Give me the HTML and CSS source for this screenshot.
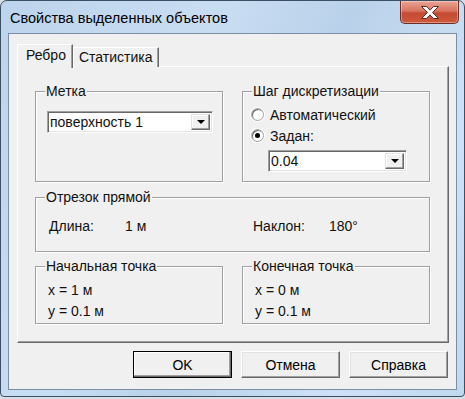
FILE: index.html
```html
<!DOCTYPE html>
<html lang="ru">
<head>
  <meta charset="UTF-8" />
  <title>Свойства выделенных объектов</title>
  <link rel="stylesheet" href="styles.css">
</head>
<body>
  <div class="window">
    <div class="titlebar">
      <span class="title">Свойства выделенных объектов</span>
      <div class="close">
        <svg width="22" height="15" viewBox="0 0 22 15">
          <path d="M2.5 1.5h5l3.5 3.6 3.5-3.6h5l-6 6 6 6h-5l-3.5-3.6-3.5 3.6h-5l6-6z" fill="#fff" stroke="#5a2a26" stroke-width="1" stroke-linejoin="round"/>
        </svg>
      </div>
    </div>

    <div class="client">
      <div class="tabs">
        <div class="tab active">Ребро</div>
        <div class="tab">Статистика</div>
      </div>

      <div class="panel">
        <div class="row row-top">
          <div class="group">
            <span class="legend">Метка</span>
            <div class="combo combo-label">
              <span class="combo-text">поверхность 1</span>
              <span class="combo-btn"><i class="arrow"></i></span>
            </div>
          </div>
          <div class="group group-step">
            <span class="legend">Шаг дискретизации</span>
            <div class="radio"><span class="dot"></span>Автоматический</div>
            <div class="radio"><span class="dot checked"></span>Задан:</div>
            <div class="combo combo-step">
              <span class="combo-text">0.04</span>
              <span class="combo-btn"><i class="arrow"></i></span>
            </div>
          </div>
        </div>

        <div class="group group-segment">
          <span class="legend">Отрезок прямой</span>
          <span class="cell c1">Длина:</span>
          <span class="cell c2">1 м</span>
          <span class="cell c3">Наклон:</span>
          <span class="cell">180°</span>
        </div>

        <div class="row row-bottom">
          <div class="group group-point">
            <span class="legend">Начальная точка</span>
            <div>x = 1 м</div>
            <div>y = 0.1 м</div>
          </div>
          <div class="group group-point">
            <span class="legend">Конечная точка</span>
            <div>x = 0 м</div>
            <div>y = 0.1 м</div>
          </div>
        </div>
      </div>

      <div class="buttons">
        <button class="default">OK</button>
        <button>Отмена</button>
        <button>Справка</button>
      </div>
    </div>
  </div>
</body>
</html>
```

FILE: styles.css
```css
* {
  box-sizing: border-box;
}

body {
  margin: 0;
  width: 465px;
  height: 399px;
  overflow: hidden;
  background: #d9dee4;
  font-family: 'Liberation Sans', Arial, sans-serif;
  font-size: 14px;
  color: #111;
}

.window {
  height: 397px;
  border: 1px solid #3d4f63;
  border-radius: 7px 7px 4px 4px;
  background: linear-gradient(115deg, #bcd4ec 0%, #c9ddf2 35%, #b9d1ea 55%, #cfe1f4 80%, #c2d8ee 100%);
  padding: 0 7px 6px 7px;
  display: flex;
  flex-direction: column;
}

.titlebar {
  height: 32px;
  display: flex;
  align-items: flex-start;
  justify-content: space-between;
}

.title {
  margin: 9px 0 0 2px;
  font-size: 14.5px;
  color: #000;
}

.close {
  width: 59px;
  height: 23px;
  margin-right: -2px;
  border: 1px solid #6b2e28;
  border-top: none;
  border-radius: 0 0 5px 5px;
  background: linear-gradient(#e8a596 0%, #d9745f 45%, #c44a33 55%, #d0593c 100%);
  box-shadow: inset 0 0 0 1px rgba(255, 255, 255, 0.35);
  display: flex;
  align-items: center;
  justify-content: center;
}

.client {
  flex: 1;
  border: 1px solid #7b8fa4;
  background: #f0f0f0;
  padding: 10px 7px 10px 8px;
  display: flex;
  flex-direction: column;
}

.tabs {
  display: flex;
  align-items: flex-end;
  height: 23px;
  position: relative;
  z-index: 1;
  margin-bottom: -1px;
}

.tab {
  height: 20px;
  padding: 1px 5px 0 5px;
  border: 1px solid #fff;
  border-bottom: none;
  border-right: 1px solid #696969;
  box-shadow: inset -1px 0 0 #a0a0a0;
  background: #f0f0f0;
  line-height: 17px;
}

.tab.active {
  height: 24px;
  width: 56px;
  padding: 2px 0 0 8px;
  margin-bottom: -1px;
}

.panel {
  height: 277px;
  border: 1px solid #fff;
  border-right-color: #696969;
  border-bottom-color: #696969;
  box-shadow: inset -1px -1px 0 #a0a0a0;
  padding: 24px 18px 18px 17px;
  display: flex;
  flex-direction: column;
}

.row {
  display: grid;
  grid-template-columns: 188px 188px;
  column-gap: 19px;
}

.group {
  position: relative;
  border: 1px solid #a0a0a0;
  box-shadow: inset 1px 1px 0 #fff, 1px 1px 0 #fff;
}

.legend {
  position: absolute;
  top: -9px;
  left: 9px;
  padding: 0 1px;
  background: #f0f0f0;
  line-height: 16px;
}

.row-top .group {
  height: 91px;
}

.combo {
  display: flex;
  background: #fff;
  border: 1px solid;
  border-color: #a0a0a0 #fff #fff #a0a0a0;
  box-shadow: inset 1px 1px 0 #696969, inset -1px -1px 0 #e3e3e3;
}

.combo-label {
  width: 166px;
  height: 22px;
  margin: 19px 0 0 11px;
}

.combo-text {
  flex: 1;
  padding: 2px 0 0 2px;
  line-height: 16px;
}

.combo-btn {
  width: 19px;
  margin: 2px 2px 2px 0;
  background: #f0f0f0;
  border: 1px solid;
  border-color: #e3e3e3 #696969 #696969 #e3e3e3;
  box-shadow: inset -1px -1px 0 #a0a0a0, inset 1px 1px 0 #fff;
  display: flex;
  align-items: center;
  justify-content: center;
}

.arrow {
  width: 0;
  height: 0;
  border-left: 4px solid transparent;
  border-right: 4px solid transparent;
  border-top: 4px solid #000;
}

.group-step {
  padding: 12px 0 0 8px;
}

.radio {
  display: flex;
  align-items: center;
  gap: 6px;
  height: 21px;
}

.dot {
  width: 13px;
  height: 13px;
  border-radius: 50%;
  background: #fff;
  border: 1px solid #a0a0a0;
  box-shadow: inset 1px 1px 0 #696969, 0 0 0 1px #fff;
  display: flex;
  align-items: center;
  justify-content: center;
}

.dot.checked::after {
  content: '';
  width: 5px;
  height: 5px;
  border-radius: 50%;
  background: #000;
}

.combo-step {
  width: 139px;
  height: 22px;
  margin: 4px 0 0 17px;
}

.group-segment {
  height: 55px;
  margin: 15px 0 14px 0;
  display: flex;
  align-items: center;
  padding: 2px 0 0 13px;
}

.cell {
  line-height: 16px;
}

.c1 {
  width: 76px;
}

.c2 {
  width: 128px;
}

.c3 {
  width: 76px;
}

.group-point {
  height: 58px;
  padding: 13px 0 0 12px;
  line-height: 21px;
}

.buttons {
  display: flex;
  justify-content: flex-end;
  gap: 9px;
  margin-top: 8px;
  padding-right: 1px;
}

button {
  width: 99px;
  height: 27px;
  font: inherit;
  color: #000;
  background: #f0f0f0;
  border: 1px solid;
  border-color: #fff #696969 #696969 #fff;
  box-shadow: inset -1px -1px 0 #a0a0a0, inset 1px 1px 0 #e3e3e3;
  padding: 0;
}

button.default {
  outline: 1px solid #000;
  outline-offset: -1px;
  border-color: #fff #696969 #696969 #fff;
  box-shadow: inset -1px -1px 0 #696969, inset -2px -2px 0 #a0a0a0, inset 1px 1px 0 #fff;
}
```
